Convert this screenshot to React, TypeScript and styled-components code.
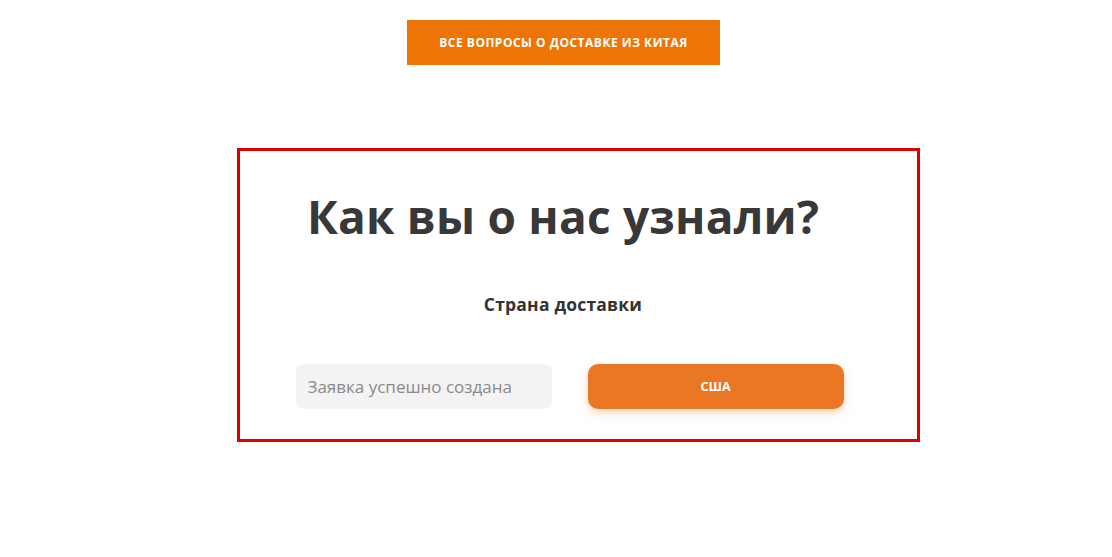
import { createGlobalStyle, styled } from 'styled-components';

const GlobalStyle = createGlobalStyle`
    body {
        margin: 0;
        background: #ffffff;
        font-family: "Liberation Sans", Arial, sans-serif;
    }
`;

const Page = styled.div`
    display: flex;
    flex-direction: column;
    align-items: center;
    min-height: 557px;
`;

const TopButton = styled.button`
    margin-top: 20px;
    margin-left: 15px;
    width: 313px;
    height: 45px;
    padding: 0;
    border: none;
    background: #ee7505;
    color: #ffffff;
    font-family: "Open Sans", sans-serif;
    font-weight: 700;
    font-size: 12px;
    letter-spacing: 0.5px;
    text-transform: uppercase;
    cursor: pointer;
`;

const Frame = styled.section`
    box-sizing: border-box;
    margin-top: 83px;
    margin-left: 44px;
    width: 683px;
    height: 294px;
    border: 3px solid #dd0000;
    display: flex;
    flex-direction: column;
    align-items: center;
    padding: 0 72px 0 56px;
`;

const Title = styled.h2`
    margin: 37px 0 0 -14px;
    font-family: "Open Sans", sans-serif;
    font-weight: 700;
    font-size: 46px;
    line-height: 56px;
    color: #383838;
    letter-spacing: 0.2px;
`;

const Subtitle = styled.div`
    margin-top: 48px;
    margin-left: -14px;
    font-family: "Open Sans", sans-serif;
    font-weight: 700;
    font-size: 17.5px;
    letter-spacing: 0.2px;
    line-height: 24px;
    color: #333333;
`;

const Row = styled.div`
    margin-top: 48px;
    display: flex;
    gap: 36px;
    align-self: stretch;
`;

const Field = styled.input`
    box-sizing: border-box;
    width: 256px;
    height: 45px;
    border: none;
    border-radius: 8px;
    background: #f3f3f3;
    padding: 0 12px;
    font-family: "Open Sans", sans-serif;
    font-size: 17px;
    color: #333;
    outline: none;

    &::placeholder {
        color: #8a8a8a;
    }
`;

const Submit = styled.button`
    width: 256px;
    height: 45px;
    border: none;
    border-radius: 10px;
    background: #ea7724;
    color: #ffffff;
    font-family: "Open Sans", sans-serif;
    font-weight: 700;
    font-size: 12.5px;
    box-shadow: 0 4px 10px rgba(234, 119, 36, 0.3);
    cursor: pointer;
`;

export default function App() {
    return (
        <>
            <GlobalStyle />
            <Page>
                <TopButton>Все вопросы о доставке из Китая</TopButton>
                <Frame>
                    <Title>Как вы о нас узнали?</Title>
                    <Subtitle>Страна доставки</Subtitle>
                    <Row>
                        <Field placeholder="Заявка успешно создана" />
                        <Submit>США</Submit>
                    </Row>
                </Frame>
            </Page>
        </>
    );
}
